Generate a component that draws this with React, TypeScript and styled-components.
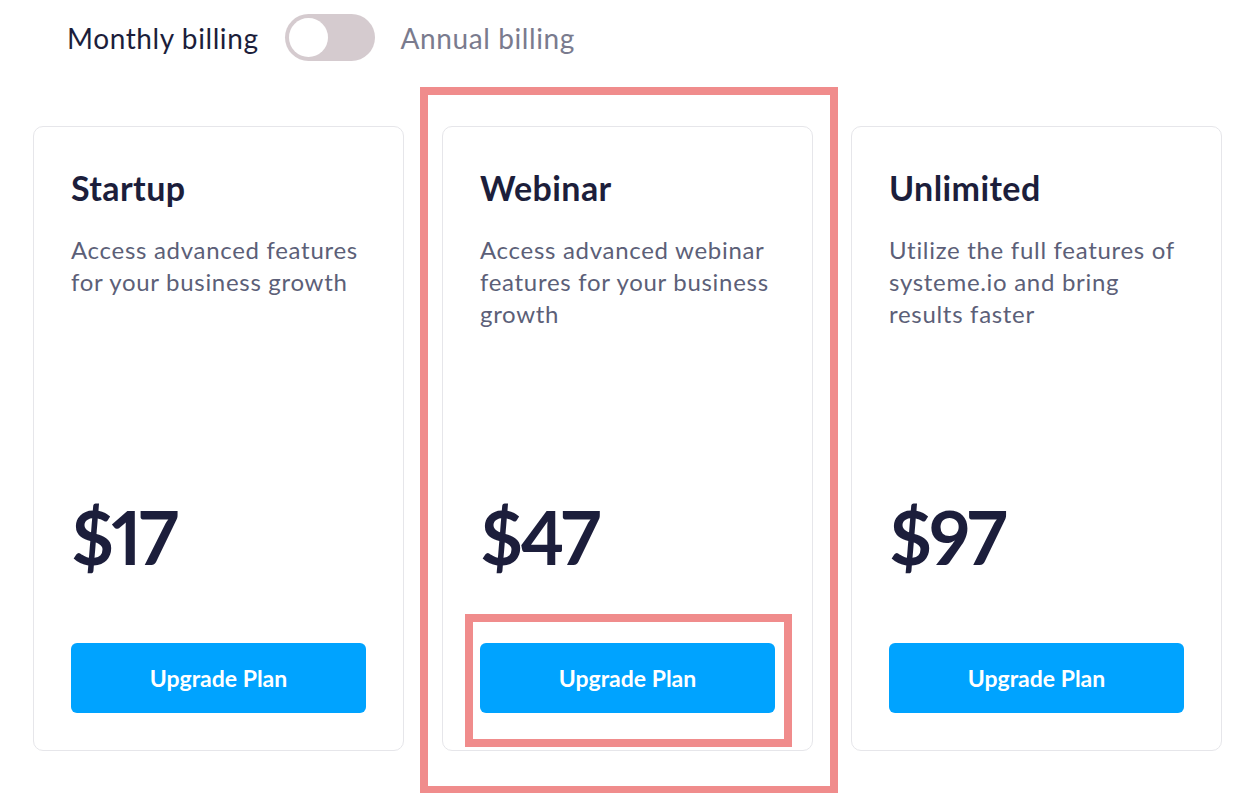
import styled, { createGlobalStyle } from "styled-components";

interface PlanI {
    name: string;
    description: string;
    price: number;
    highlighted?: boolean;
}

const PLANS: PlanI[] = [
    { name: "Startup", description: "Access advanced features for your business growth", price: 17 },
    { name: "Webinar", description: "Access advanced webinar features for your business growth", price: 47, highlighted: true },
    { name: "Unlimited", description: "Utilize the full features of systeme.io and bring results faster", price: 97 },
];

const GlobalStyle = createGlobalStyle`
    html, body {
        margin: 0;
        padding: 0;
        background: #ffffff;
    }
    body {
        font-family: "Lato", "Noto Sans", sans-serif;
        color: #1c1e3b;
    }
`;

const Page = styled.div`
    position: relative;
    width: 1253px;
    height: 793px;
    overflow: hidden;
`;

const BillingRow = styled.div`
    display: flex;
    align-items: center;
    gap: 26px;
    padding: 14px 0 0 67px;
    height: 47px;
`;

const BillingLabel = styled.span<{ $active?: boolean }>`
    font-size: 28px;
    color: ${(p) => (p.$active ? "#1c1e3b" : "#7a7b8e")};
    letter-spacing: 0.6px;
`;

const Toggle = styled.div`
    width: 90px;
    height: 47px;
    border-radius: 24px;
    background: #d5cbcf;
    display: flex;
    align-items: center;
    padding-left: 4px;
    box-sizing: border-box;
`;

const Knob = styled.div`
    width: 39px;
    height: 39px;
    border-radius: 50%;
    background: #ffffff;
`;

const CardRow = styled.div`
    display: grid;
    grid-template-columns: repeat(3, 371px);
    gap: 38px;
    padding: 65px 0 0 33px;
`;

const CardSlot = styled.div`
    position: relative;
`;

const Card = styled.div`
    height: 625px;
    box-sizing: border-box;
    border: 1px solid #e6e6ea;
    border-radius: 10px;
    padding: 40px 37px 37px 37px;
    display: flex;
    flex-direction: column;
`;

const Title = styled.h2`
    margin: 0;
    font-size: 34px;
    font-weight: 700;
    line-height: 42px;
    letter-spacing: 0.4px;
    color: #1c1e3b;
`;

const Description = styled.p`
    margin: 25px 0 0 0;
    font-size: 24px;
    line-height: 32px;
    letter-spacing: 0.7px;
    color: #5c5f78;
    flex: 1;
`;

const Price = styled.div`
    font-size: 74px;
    font-weight: 700;
    line-height: 80px;
    letter-spacing: -3px;
    font-feature-settings: "pnum";
    font-variant-numeric: proportional-nums;
    color: #1c1e3b;
    margin-bottom: 66px;
`;

const UpgradeButton = styled.button`
    width: 295px;
    height: 70px;
    border: none;
    border-radius: 6px;
    background: #00a3ff;
    color: #ffffff;
    font-family: inherit;
    font-size: 23px;
    font-weight: 700;
    cursor: pointer;
`;

// red annotation boxes drawn over the screenshot
const Highlight = styled.div<{ $inset: string }>`
    position: absolute;
    inset: ${(p) => p.$inset};
    border: 8px solid #f08c8c;
    pointer-events: none;
`;

function PlanCard({ plan }: { plan: PlanI }) {
    return (
        <CardSlot>
            <Card>
                <Title>{plan.name}</Title>
                <Description>{plan.description}</Description>
                <Price>${plan.price}</Price>
                <UpgradeButton>Upgrade Plan</UpgradeButton>
            </Card>
            {plan.highlighted && (
                <>
                    <Highlight $inset="-39px -25px -43px -22px" />
                    <Highlight $inset="488px 21px 4px 23px" />
                </>
            )}
        </CardSlot>
    );
}

export default function App() {
    return (
        <Page>
            <GlobalStyle />
            <BillingRow>
                <BillingLabel $active>Monthly billing</BillingLabel>
                <Toggle>
                    <Knob />
                </Toggle>
                <BillingLabel>Annual billing</BillingLabel>
            </BillingRow>
            <CardRow>
                {PLANS.map((plan) => (
                    <PlanCard key={plan.name} plan={plan} />
                ))}
            </CardRow>
        </Page>
    );
}
